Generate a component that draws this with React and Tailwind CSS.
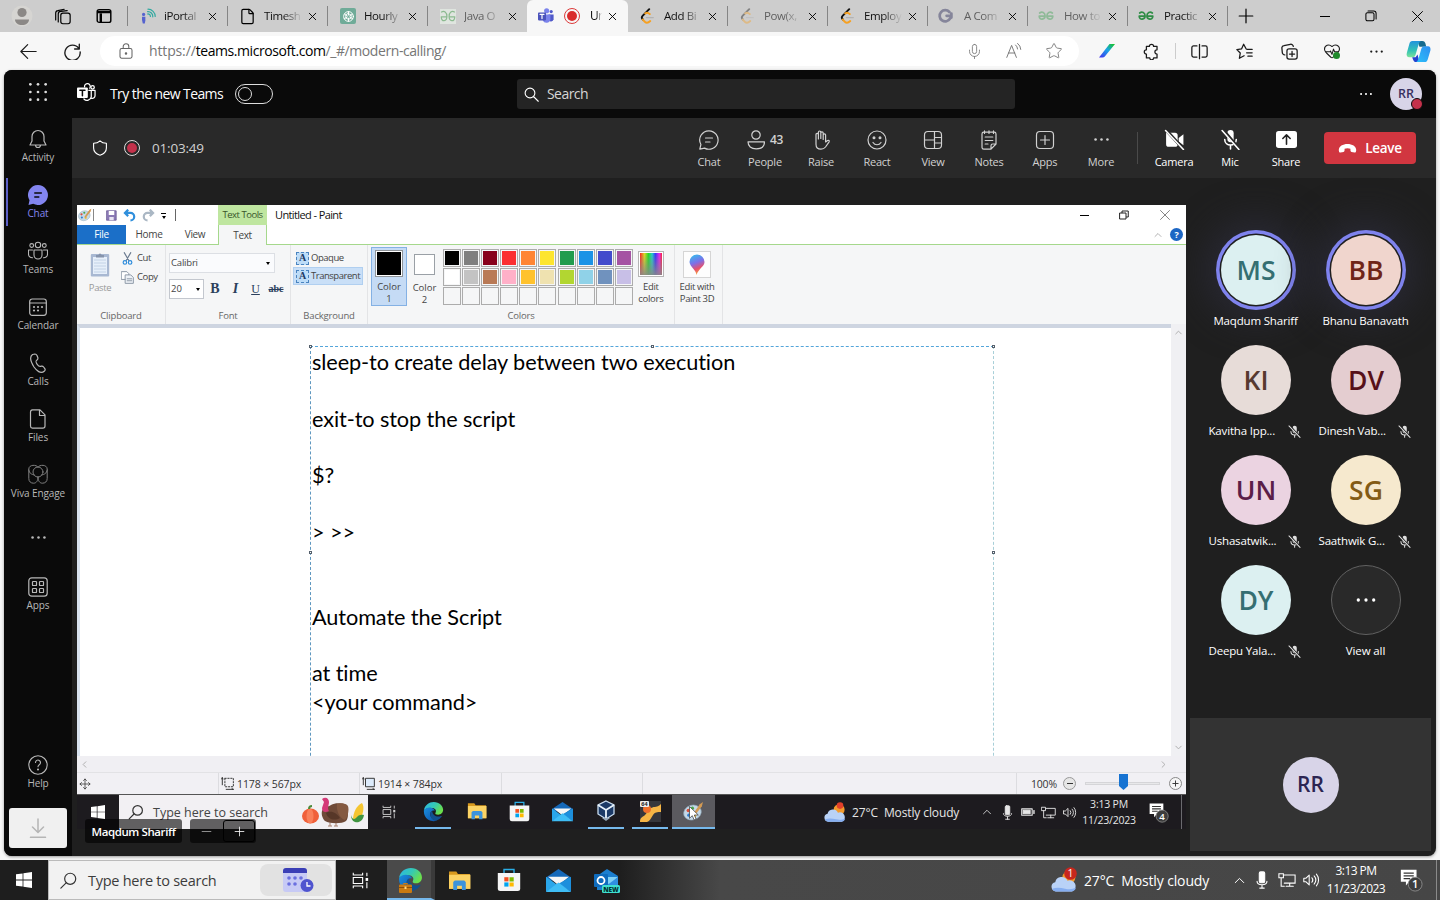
import React from "react";
import {
  Mic, Star, HeartPulse, X, Minus, Plus, ChevronUp, ChevronLeft, ChevronRight, ChevronDown,
  File, Move,
} from "lucide-react";

const Svg = ({ s = 20, w, h, vb = "0 0 20 20", sw = 1.2, children, className = "" }) => (
  <svg width={w || s} height={h || s} viewBox={vb} fill="none" stroke="currentColor" strokeWidth={sw}
    strokeLinecap="round" strokeLinejoin="round" className={"shrink-0 " + className}>{children}</svg>
);
const Cell = ({ className = "", children }) => (
  <div className={"flex shrink-0 items-center justify-center " + className}>{children}</div>
);
const Dots = ({ s = 16, className = "" }) => (
  <Svg s={s} className={className}><g fill="currentColor" stroke="none"><circle cx="3" cy="10" r="1.5" /><circle cx="10" cy="10" r="1.5" /><circle cx="17" cy="10" r="1.5" /></g></Svg>
);

/* ---------- brand drawings ---------- */
const TeamsColor = () => (
  <Svg s={16} sw={0} className="overflow-visible">
    <circle cx="16.5" cy="4.5" r="2" fill="#5059c9" /><circle cx="10.8" cy="3.4" r="3.2" fill="#7b83eb" />
    <path d="M13 8h6.5v6a3.5 3.5 0 0 1-6.5 1z" fill="#5059c9" /><path d="M6 8h9.5v6.5a5 5 0 0 1-9.5 1z" fill="#7b83eb" />
    <rect x="0" y="5.5" width="10" height="10" rx="1" fill="#4b53bc" />
    <path d="M2.6 8h4.8M5 8v5.2" stroke="#fff" strokeWidth="1.5" />
  </Svg>
);
const TeamsWhite = () => (
  <Svg s={19} sw={1.3}>
    <path d="M8 4.2a3 3 0 1 1 5.4 1.2" /><circle cx="16.4" cy="4.6" r="1.8" />
    <path d="M12.5 7.8H15v6.7a4.5 4.5 0 0 1-7.7 2.3M15 7.8h4v5.4a3 3 0 0 1-3.6 3" />
    <rect x="0" y="4.8" width="11.4" height="11" rx="1" fill="#fff" stroke="none" />
    <path d="M3 7.6h5.4M5.7 7.6v5.8" stroke="#0a0a0a" strokeWidth="1.6" />
  </Svg>
);
const Leet = ({ dim }) => (
  <Svg s={16} sw={2.4} className={dim ? "opacity-40" : ""}>
    <path d="M11.500 1.500 3.500 9.600a3.400 3.400 0 0 0 0 4.800" stroke="#111" />
    <path d="M6.500 6.800c2-1.700 4-1 5.800.8M3.500 14.400l2.500 2.800c2 1.800 4.500 1.300 6.800-.9" stroke="#f6a021" />
    <path d="M8 12h8.500" stroke="#b3b3b3" strokeWidth="1.800" />
  </Svg>
);
const Geeks = ({ tone }) => (
  <Svg w={16} h={10} vb="0 0 16 10" sw={1.7} className={tone}>
    <path d="M1.700 2C4 .3 7.100 1.600 7.100 5S1.500 9.800 1.200 5.200H6.500M14.300 2C12 .3 8.900 1.600 8.900 5s5.600 4.800 5.900.2H9.500" />
  </Svg>
);
const Edge = ({ s = 24 }) => (
  <svg width={s} height={s} viewBox="0 0 24 24" className="shrink-0">
    <defs>
      <linearGradient id="eg1" x1="0" y1="0" x2="1" y2="0.5"><stop offset="0" stopColor="#2bb5e8" /><stop offset=".55" stopColor="#35c9b4" /><stop offset="1" stopColor="#6be04c" /></linearGradient>
      <linearGradient id="eg2" x1="0" y1="0" x2="1" y2="1"><stop offset="0" stopColor="#1a8fe0" /><stop offset="1" stopColor="#0c50a8" /></linearGradient>
    </defs>
    <path d="M1 10.500C2 4.500 7 1 12.200 1 18.800 1 23 5.500 23 10c0 3.500-2.700 5.600-5.600 5.600-2.400 0-3.900-1-3.200-2 1.600-2.600-.2-5.600-4-5.600C6 8 2.500 9 1 10.500z" fill="url(#eg1)" />
    <path d="M1 10.800C3 7.800 7.200 6.800 10.200 8c1.600.6 2.800 1.700 3.300 2.900-3-.8-5.200 1.200-5.200 4.300 0 3.800 3.400 6.800 7.400 7.200A11 11 0 0 1 1 12z" fill="url(#eg2)" />
    <path d="M8.300 15.200c0-2 .8-3.500 2.200-4.100.2 4 3.400 6.700 7 6.700 1.800 0 3-.5 3.700-.7.5 0 .6.300.3.700A11 11 0 0 1 15 22.500c-4.200 0-6.700-3.500-6.700-7.300z" fill="#12508f" />
  </svg>
);
const Folder = ({ s = 22 }) => (
  <svg width={s} height={s} viewBox="0 0 22 22" className="shrink-0">
    <path d="M1 2.500h7l1.500 2.200H21V19H1z" fill="#d99a1e" /><path d="M1 5.500h20.500V19H1z" fill="#fcd364" />
    <path d="M5 20v-7.500l1.500-1.500h9l1.500 1.500V20h-3.700v-4H8.700v4z" fill="#3c93dc" />
  </svg>
);
const Store = ({ s = 24 }) => (
  <svg width={s} height={s} viewBox="0 0 24 24" className="shrink-0">
    <path d="M7 6V1.500h10V6" fill="none" stroke="#2aaee6" strokeWidth="1.400" />
    <path d="M.8 5h22.400v15.500a2.500 2.500 0 0 1-2.500 2.500H3.300a2.500 2.500 0 0 1-2.500-2.500z" fill="#f5f5f5" />
    <path fill="#f25022" d="M7.300 9.200h4.200v4.200H7.300z" /><path fill="#7fba00" d="M12.500 9.200h4.200v4.200h-4.200z" />
    <path fill="#00a4ef" d="M7.300 14.400h4.200v4.200H7.300z" /><path fill="#ffb900" d="M12.500 14.400h4.200v4.200h-4.200z" />
  </svg>
);
const Mail = ({ s = 24 }) => (
  <svg width={s} height={s} viewBox="0 0 24 24" className="shrink-0">
    <path d="M0 9 12 1l12 8v3H0z" fill="#1568b8" /><path d="M2 8.500h20l-10 8z" fill="#f6f6f6" />
    <path d="M0 8.500 12 17 0 23z" fill="#2aa6ea" /><path d="M24 8.500v14.500L12 15z" fill="#1d8fdc" /><path d="m0 23 12-9 12 9z" fill="#3fbdf5" />
  </svg>
);
const Windows = ({ s = 16 }) => (
  <svg width={s} height={s} viewBox="0 0 16 16" className="shrink-0" fill="#fff"><path d="M0 2.300 6.600 1.400v6.200H0zM7.400 1.300 16 0v7.600H7.400zM0 8.400h6.600v6.200L0 13.700zM7.400 8.400H16V16l-8.600-1.200z" /></svg>
);
const TaskView = ({ s = 17 }) => (
  <Svg s={s} sw={1.300} className="text-white">
    <path d="M1.500 1v2.500h11V1M1.500 19v-2.500h11V19M1.500 6.500h11v7h-11zM17.500 1v4M17.500 12v7" strokeLinecap="butt" strokeLinejoin="miter" /><rect x="16" y="7" width="3" height="3.500" fill="#fff" stroke="none" />
  </Svg>
);
const Weather = ({ s = 24, n }) => (
  <svg width={s} height={s} viewBox="0 0 24 24" className="shrink-0">
    <circle cx="16.500" cy="9.500" r="6" fill="#f39a2c" />
    <path d="M4.500 22.500a4.300 4.300 0 0 1-.6-8.500 6 6 0 0 1 11.300-1.300 5 5 0 0 1 4.300 9.800z" fill="#b9d2f7" />
    <path d="M1 20c4-1.500 8-1 12 0s7 .5 10-1c-.4 2.300-2 3.500-4 3.500H4.500A4 4 0 0 1 1 20z" fill="#86aef0" />
    {n ? <><circle cx="18" cy="6" r="5.800" fill="#c8271d" /><text x="18" y="9.400" fontSize="9.500" fill="#fff" textAnchor="middle">1</text></> : <circle cx="17.500" cy="5" r="3.600" fill="#e2402a" />}
  </svg>
);
const Palette = ({ s = 14 }) => (
  <svg width={s} height={s} viewBox="0 0 20 20" className="shrink-0">
    <ellipse cx="9" cy="11" rx="8.500" ry="7" fill="#c5d9e8" stroke="#8fa7b8" strokeWidth=".6" transform="rotate(-18 9 11)" />
    <circle cx="5" cy="9" r="1.600" fill="#d8503c" /><circle cx="9" cy="6.800" r="1.500" fill="#48a84a" /><circle cx="5.500" cy="13.500" r="1.500" fill="#2f7ed0" /><circle cx="11" cy="14" r="1.600" fill="#efc03a" />
    <path d="m9 13 7-10 3-2-1 4-7 9z" fill="#d39a54" />
  </svg>
);
const Copilot = () => (
  <svg width="25" height="23" viewBox="0 0 26 24" className="shrink-0">
    <defs>
      <linearGradient id="cp1" x1="0" y1="0" x2="0" y2="1"><stop offset="0" stopColor="#2193dd" /><stop offset=".6" stopColor="#33c3b4" /><stop offset="1" stopColor="#7de39a" /></linearGradient>
      <linearGradient id="cp2" x1="1" y1="0" x2="0" y2="1"><stop offset="0" stopColor="#2f8ef0" /><stop offset="1" stopColor="#2cc0fa" /></linearGradient>
    </defs>
    <path d="M12 1h5c2 0 2.800 1.200 3.300 3l.8 3H14z" fill="#176b8d" />
    <path d="M6.500 1h9c-1.500.8-2 2-2.500 4l-3 10c-.6 2-1.600 3-3.600 3H3.500C1 18 .2 16 .8 13.500L3.500 4C4 2 5 1 6.500 1z" fill="url(#cp1)" />
    <path d="M6.500 18H10l2-3 2 8h-3.500C8 23 7.200 20.500 6.500 18z" fill="#2543d0" />
    <path d="M19.500 6.500H23c2 0 3 2 2.400 4.500l-2.700 9c-.6 2-1.600 3-3.200 3h-9c1.500-.8 2-2 2.600-4l2.800-9.500c.6-2 1.600-3 3.600-3z" fill="url(#cp2)" />
  </svg>
);
const Speaker = ({ s = 18 }) => (
  <Svg s={s}><path d="M2 8v4h2.500L8 15.500v-11L4.500 8zM11 7.500a4 4 0 0 1 0 5M13.500 5.500a7 7 0 0 1 0 9M16 3.500a10 10 0 0 1 0 13" /></Svg>
);
const Net = ({ s = 18 }) => (
  <Svg s={s}><path d="M7 4.500h12v9H7M13 13.500V17M9 17h8M1 3h5v4.500H1zM3.500 7.500V17H7" strokeLinejoin="miter" /></Svg>
);
const MicSolid = ({ s = 18 }) => (
  <Svg s={s}><rect x="7" y="1" width="6" height="12" rx="1.500" fill="currentColor" /><path d="M4.500 11.500c0 5 11 5 11 0M10 15.500V19M7.500 19h5" /></Svg>
);
const Note = ({ n, s = 26 }) => (
  <svg width={s} height={s} viewBox="0 0 26 26" className="shrink-0">
    <path d="M2 2h17v13h-8l-3.500 4v-4H2z" fill="#fff" /><path d="M5 5.500h11M5 8.500h11M5 11.500h7" stroke="#333" strokeWidth="1.300" />
    <circle cx="17.500" cy="17.500" r="7.500" fill="#3d3d3d" stroke="#8c8c8c" /><text x="17.500" y="21.700" fontSize="12" fill="#fff" textAnchor="middle" fontWeight="600">{n}</text>
  </svg>
);

/* ---------- browser ---------- */
const tabs = [
  { t: "iPortal", i: <Svg s={16} sw={1.500}><path d="M9.500 7.500a3 3 0 0 1 3.500 3M9.500 4.500a6 6 0 0 1 6.500 6.500M10 1.500a9 9 0 0 1 9 9" stroke="#32a9a0" /><circle cx="4.500" cy="8" r="2" fill="#5663cf" stroke="none" /><path d="M2.500 11h4.200v4.500L6 19.500H3.500L2.500 15z" fill="#5663cf" stroke="none" /></Svg> },
  { t: "Timesh", i: <File size={17} strokeWidth={1.700} className="-ml-px" /> },
  { t: "Hourly", i: <Cell className="h-4 w-4 rounded-[2px] bg-[#6fab98]"><Svg s={13} sw={1.500} className="text-white"><circle cx="10" cy="10" r="7.500" /><path d="m10 5.500 4 2.300v4.500l-4 2.300-4-2.300V7.800zM10 2.500v5.300M16 6.500l-4 2.300M16.500 13.500l-4.500-2.500M10 17.500v-5M3.500 13.500 8 11M4 6.500l4 2.400" /></Svg></Cell> },
  { t: "Java O", dim: 1, i: <Cell className="h-[15px] w-4 bg-[#dfe5df]"><Svg w={16} h={13} vb="0 0 16 13" sw={1.200} className="text-[#8cba90]"><path d="M1.500 2C4 .3 6.900 2 6.900 6.500S1.500 13 1.200 6.800H6.500M14.500 2C12 .3 9.100 2 9.100 6.500s5.400 6.500 5.700.3H9.500" /></Svg></Cell> },
  { active: 1, t: "Ur" },
  { t: "Add Bi", i: <Leet /> },
  { t: "Pow(x,", dim: 1, i: <Leet dim /> },
  { t: "Employ", i: <Leet /> },
  { t: "A Com", dim: 1, i: <Svg s={16} sw={3.400} className="-ml-[3px] text-[#85859a]"><path d="M15.500 5a7 7 0 1 0 1 8M12 9.800h6M18 7v5" /></Svg> },
  { t: "How to", dim: 1, i: <Geeks tone="-ml-[2px] text-[#8fba98]" /> },
  { t: "Practic", i: <Geeks tone="-ml-[2px] text-[#2f8d46]" /> },
];

function BrowserTab({ tab, sep }) {
  if (tab.active)
    return (
      <div className="flex h-full w-[101px] shrink-0 items-center rounded-t-md bg-[#f7f7f7] pl-[11px]">
        <TeamsColor />
        <Cell className="ml-[10px] size-4 rounded-full border-[1.500px] border-[#dc3a3a]"><span className="size-[10px] rounded-full bg-[#d92c2c]" /></Cell>
        <span className="ml-[10px] w-[12px] overflow-hidden text-xs tracking-[-0.06em] [mask-image:linear-gradient(to_right,#000_50%,transparent)]">{tab.t}</span>
        <X size={13} strokeWidth={1.700} className="ml-[4px]" />
      </div>
    );
  return (
    <div className="flex h-full w-[100px] shrink-0 items-center pl-[12px]">
      <div className={"flex h-5 w-[88px] items-center border-r " + (sep ? "border-transparent" : "border-[#858585]")}>
        <span className="flex w-[24px] shrink-0">{tab.i}</span>
        <span className={"w-[38px] shrink-0 overflow-hidden text-[11.500px] tracking-[-0.035em] whitespace-nowrap [mask-image:linear-gradient(to_right,#000_50%,transparent)] " + (tab.dim ? "text-[#5f5f5f]" : "text-[#111]")}>{tab.t}</span>
        <X size={13} strokeWidth={1.700} className="ml-[4px] shrink-0" />
      </div>
    </div>
  );
}

function TabStrip() {
  return (
    <div className="flex h-8 shrink-0 items-center bg-[#cdcdcd] text-black">
      <Cell className="w-11"><svg width="22" height="22" viewBox="0 0 22 22"><circle cx="11" cy="11" r="10.500" fill="#d6d5d2" /><circle cx="11" cy="7.500" r="4.600" fill="#8b8886" /><path d="M4 14.500h14c0 3.500-3 5.500-7 5.500s-7-2-7-5.500z" fill="#8b8886" /></svg></Cell>
      <Cell className="w-9"><Svg s={17} sw={1.400}><rect x="8" y="6" width="11" height="12.500" rx="2.500" /><path d="M5 16.500V7a3 3 0 0 1 3-3l7.500-1M2 14V6a3 3 0 0 1 2.500-3L12 1.500" /></Svg></Cell>
      <Cell className="w-[47px] pl-px"><Svg s={16} sw={1.800}><rect x="1.500" y="2" width="17" height="16" rx="2.500" /><path d="M1.500 5h17M6 7v11" strokeWidth="3" strokeLinecap="butt" /></Svg></Cell>
      <div className="h-5 w-px bg-[#858585]" />
      {tabs.map((t, i) => (
        <div key={i} className={"h-8 " + (i === 4 ? "-ml-px" : "")}><BrowserTab tab={t} sep={i === 3} /></div>
      ))}
      <Cell className="w-[36px]"><Svg s={16} sw={1.500}><path d="M10 1.500v17M1.500 10h17" /></Svg></Cell>
      <div className="flex flex-1 justify-end">
        <Cell className="w-[46px]"><span className="h-px w-[10px] bg-black" /></Cell>
        <Cell className="w-[46px]"><Svg s={12} sw={1.700}><rect x="1.500" y="4.500" width="13.500" height="13.500" rx="2.500" /><path d="M5 1.800h9.500a4 4 0 0 1 4 4V15" /></Svg></Cell>
        <Cell className="w-[46px]"><Svg s={11} sw={1.800}><path d="m1 1 18 18M19 1 1 19" /></Svg></Cell>
      </div>
    </div>
  );
}

function AddressBar() {
  return (
    <div className="flex h-[38px] shrink-0 items-center text-[#1b1b1b]">
      <Cell className="w-14"><Svg s={17} sw={1.400}><path d="M19 10H1.500M9 2 1 10l8 8" /></Svg></Cell>
      <Cell className="w-[32px]"><Svg s={17} sw={1.600}><path d="M17.500 6.500A9 9 0 1 0 19 10.500M18 1.500V7h-5.500" /></Svg></Cell>
      <div className="ml-[12px] flex h-[30px] w-[979px] items-center rounded-full bg-white">
        <Cell className="ml-[15px] w-[22px] text-[#666]"><Svg s={16} sw={1.300}><rect x="2.500" y="7" width="15" height="12" rx="2" /><path d="M6.500 7V4.500a3.500 3.500 0 0 1 7 0V7" /><circle cx="10" cy="13" r=".9" fill="currentColor" /></Svg></Cell>
        <div className="ml-3 flex-1 text-sm text-[#757575] tracking-[-0.03em]"><span className="tracking-[-0.01em]">https://</span><span className="text-black">teams.microsoft.com</span>/_#/modern-calling/</div>
        <Cell className="w-10 text-[#777]"><Mic size={17} strokeWidth={1.200} /></Cell>
        <Cell className="w-10 text-[#777]"><Svg s={16}><path d="m1 18 6-15 6 15M3 12.500h8M12 2.500a7 7 0 0 1 2.500 5M14.500.5A10 10 0 0 1 18.500 8" /></Svg></Cell>
        <Cell className="mr-[5px] w-10 text-[#777]"><Star size={18} strokeWidth={1.200} /></Cell>
      </div>
      <Cell className="w-[55px]"><svg width="16" height="14" viewBox="0 0 16 14"><defs><linearGradient id="pen" x1="1" y1="0" x2="0" y2="1"><stop offset="0" stopColor="#17c417" /><stop offset=".45" stopColor="#19a5e6" /><stop offset="1" stopColor="#442df0" /></linearGradient></defs><path d="M10.500 0H16L5.800 12.500Q5 13.500 3.500 13.500H0z" fill="url(#pen)" /></svg></Cell>
      <Cell className="w-[35px]"><Svg s={17} sw={1.500}><path d="M4 4h3.500a2.500 2.500 0 0 1 5 0H16.500v4a1.500 1.500 0 0 0 0 5v4.500h-4a2.200 2.200 0 0 1-4.500 0H4v-4.500a2.500 2.500 0 0 1 0-5z" /></Svg></Cell>
      <div className="ml-[6px] h-4 w-px bg-[#ccc]" />
      <Cell className="w-[47px]"><Svg s={17} sw={1.500}><path d="M7 3.500H3a2 2 0 0 0-2 2v9a2 2 0 0 0 2 2h4M13 3.500h4a2 2 0 0 1 2 2v9a2 2 0 0 1-2 2h-4M10 1.500v17" /></Svg></Cell>
      <Cell className="w-[42px]"><Svg s={17} sw={1.500}><path d="M12 7 9 1.500 6.500 7l-5.500.8 4 4-1 6.200L9.500 15M13 7.500h6M12.500 11.500H19M14 15.500h5" /></Svg></Cell>
      <Cell className="w-[48px]"><Svg s={17} sw={1.500}><rect x="7" y="7" width="12" height="12" rx="2.500" /><path d="M13 10v6M10 13h6M4.500 14A3 3 0 0 1 1.500 11L1 5.500A3 3 0 0 1 3.500 3L11 1.500A3 3 0 0 1 14.500 4" /></Svg></Cell>
      <Cell className="relative w-[38px]"><HeartPulse size={18} strokeWidth={1.400} /><span className="absolute top-[10px] left-[20px] size-[7px] rounded-full bg-[#1f8a2c]" /></Cell>
      <Cell className="w-[50px]"><Dots s={15} /></Cell>
      <Cell className="w-[34px]"><Copilot /></Cell>
    </div>
  );
}

/* ---------- Teams chrome ---------- */
function TeamsHeader() {
  return (
    <div className="flex h-12 shrink-0 items-center bg-[#0a0a0a] text-white">
      <Cell className="w-[68px] pb-[5px]"><Svg s={18} className="text-[#ddd]"><g fill="currentColor" stroke="none">{[1.500, 10, 18.500].map((y) => [1.500, 10, 18.500].map((x) => <circle key={x + "-" + y} cx={x} cy={y} r="1.500" />))}</g></Svg></Cell>
      <Cell className="ml-[4px] w-5 pb-[4px]"><TeamsWhite /></Cell>
      <span className="ml-[14px] w-[125px] text-sm tracking-[-0.042em] whitespace-nowrap">Try the new Teams</span>
      <div className="flex h-5 w-[38px] items-center rounded-full border border-[#ddd] pl-[2px]"><span className="size-[14px] rounded-full border border-[#ddd]" /></div>
      <div className="ml-[244px] flex h-[30px] w-[498px] items-center rounded-[3px] bg-[#242424] pl-[7px]">
        <Svg s={15} sw={1.500}><circle cx="8" cy="8" r="6.500" /><path d="m13 13 6 6" /></Svg>
        <span className="ml-2 text-sm tracking-[-0.04em] text-[#d6d6d6]">Search</span>
      </div>
      <div className="flex flex-1 items-center justify-end pr-[14px]">
        <Dots s={14} />
        <div className="relative ml-[17px] flex size-8 items-center justify-center rounded-full bg-[#d8d4e8] text-[12.500px] font-semibold text-[#37305f]">RR
          <span className="absolute right-[-1px] bottom-0 size-3 rounded-full border border-[#0a0a0a] bg-[#c4314b]" />
        </div>
      </div>
    </div>
  );
}

const rail = [
  ["Activity", <Svg s={20}><path d="M10 1.500a6 6 0 0 0-6 6v4.500L2 16h16l-2-4V7.500a6 6 0 0 0-6-6zM7.500 16a2.500 2.500 0 0 0 5 0" /></Svg>],
  ["Chat", <Svg s={20} sw={1.500}><path d="M10 0a10 10 0 1 1-4.800 18.800L.5 20l1-4.800A10 10 0 0 1 10 0z" fill="#8385f0" stroke="none" /><path d="M6.800 8h6.500M6.800 12h4" stroke="#0a0a0a" /></Svg>],
  ["Teams", <Svg s={20} sw={1.100}><circle cx="10" cy="4" r="2.700" /><circle cx="3.700" cy="4.500" r="1.900" /><circle cx="16.300" cy="4.500" r="1.900" /><path d="M6 9h8v5a4 4 0 0 1-8 0zM4.500 9h-4v4c0 2.500 1.500 3.700 4 3.700M15.500 9h4v4c0 2.500-1.500 3.700-4 3.700" /></Svg>],
  ["Calendar", <Svg s={20}><rect x="1.700" y="2" width="16.600" height="16.300" rx="2.500" /><path d="M1.700 6h16.600" /><g fill="currentColor" stroke="none"><circle cx="6" cy="13.500" r="1.100" /><circle cx="10" cy="13.500" r="1.100" /><circle cx="10" cy="10" r="1.100" /><circle cx="14" cy="10" r="1.100" /><circle cx="6" cy="10" r="1.100" /></g></Svg>],
  ["Calls", <Svg s={20}><path d="M4.500 1.500 7 1c1 0 1.500.5 2 1.500l.8 2c.3 1 0 1.800-.8 2.400-1.300 1-1.800 1.600.2 4.400s2.600 2.300 4 1.900c1-.3 1.800 0 2.400.8l1.200 1.700c.6.900.5 1.600-.3 2.300C12.500 21.500 8.500 17.500 6 14 3.500 10 1 4 4.500 1.500z" /></Svg>],
  ["Files", <Svg s={20}><path d="M4.500.8H12l5 5V17a2.200 2.200 0 0 1-2.200 2.200H4.500A2.200 2.200 0 0 1 2.500 17V3A2.200 2.200 0 0 1 4.500.8zM11.500 1v5.500H17" /></Svg>],
  ["Viva Engage", <Svg s={20} sw={1} className="text-[#808080]"><circle cx="10" cy="8" r="5" /><path d="M10 3C8.500.5 1 .3.8 5v9.500c0 3 2 4.700 4.700 4.700 3 0 4.500-2.500 4.500-6.200M10 3c1.500-2.500 9-2.700 9.200 2v9.500c0 3-2 4.700-4.700 4.700-3 0-4.500-2.500-4.500-6.200M.8 6c.5 3.500 3 4.500 5.500 5M19.200 6c-.5 3.500-3 4.500-5.500 5" /></Svg>],
  ["", <Dots s={17} />],
  ["Apps", <Svg s={20}><rect x=".8" y=".8" width="18.400" height="18.400" rx="3" /><rect x="4.500" y="4.500" width="4" height="4" rx=".6" /><rect x="11.500" y="4.500" width="4" height="4" rx=".6" /><rect x="4.500" y="11.500" width="4" height="4" rx=".6" /><rect x="11.500" y="11.500" width="4" height="4" rx=".6" /></Svg>],
];

const RailItem = ({ label, icon, active }) => (
  <div className={"relative flex h-14 w-full shrink-0 flex-col items-center " + (active ? "text-[#8385f0]" : "text-[#b8b8b8]") + (label === "Viva Engage" ? " pt-[10px]" : " pt-[11px]")}>
    {active && <span className="absolute top-1 left-[2px] h-12 w-[2px] bg-[#5b5fc7]" />}
    <div className={label ? "" : "pt-[8px]"}>{icon}</div>
    <span className={"text-[10px] leading-[14px] tracking-[-0.01em] whitespace-nowrap " + (label === "Viva Engage" ? "mt-[2px]" : "mt-px")}>{label}</span>
  </div>
);

function Rail() {
  return (
    <div className="flex w-[68px] shrink-0 flex-col items-center bg-[#0a0a0a]">
      {rail.map(([l, i], k) => <RailItem key={k} label={l} icon={i} active={l === "Chat"} />)}
      <div className="flex-1" />
      <RailItem label="Help" icon={<Svg s={20} sw={1.100}><circle cx="10" cy="10" r="9.200" /><path d="M7.500 7.500a2.500 2.500 0 1 1 3.800 2.200c-.9.6-1.300 1-1.300 2.100" /><circle cx="10" cy="14.500" r=".5" fill="currentColor" /></Svg>} />
      <div className="my-2 flex h-10 w-[58px] items-center justify-center rounded-[3px] bg-[#f0f0f0] text-[#b5b5b5]">
        <Svg s={20} sw={1.500}><path d="M10 1v13M4.500 9l5.500 5.500L15.500 9M2.500 19.300h15" /></Svg>
      </div>
    </div>
  );
}

const actions = [
  ["Chat", <Svg s={20}><path d="M10 .8a9.200 9.200 0 1 1-4.500 17.300L.8 19.200l1.100-4.700A9.200 9.200 0 0 1 10 .8zM6.500 8h7M6.500 12h4.500" /></Svg>],
  ["People", <span className="flex items-center gap-[3px]"><Svg s={20}><circle cx="9" cy="5" r="4.200" /><path d="M1 11.800h16.500c0 4.500-3 7-8.200 7S1 16.300 1 11.800z" /></Svg><b className="text-xs font-semibold tracking-[-0.04em]">43</b></span>],
  ["Raise", <Svg s={20}><path d="M5 11V4.500a1.200 1.200 0 0 1 2.400 0V9M7.400 8V2.200a1.200 1.200 0 0 1 2.400 0V8.500M9.800 8.500V3a1.200 1.200 0 0 1 2.400 0v6.500M12.200 8V5a1.200 1.200 0 0 1 2.400 0v7l2-1.500c1.200-.6 2 .3 1.500 1.300L14.500 17c-1.200 1.600-2.700 2.200-4.500 2.200-3 0-5-2-5-5V10" /></Svg>],
  ["React", <Svg s={20}><circle cx="10" cy="10" r="9" /><path d="M6 12.500c2 3 6 3 8 0" /><circle cx="7" cy="7.800" r=".9" fill="currentColor" /><circle cx="13" cy="7.800" r=".9" fill="currentColor" /></Svg>],
  ["View", <Svg s={20}><rect x="1.500" y="1.500" width="17" height="17" rx="3.500" /><path d="M11.500 1.500v17M1.500 10h10M11.500 7.500h7M11.500 13h7" /></Svg>],
  ["Notes", <Svg s={20}><path d="M3 4a1.800 1.800 0 0 1 1.800-1.800h10.400A1.800 1.800 0 0 1 17 4v10l-5 5.200H4.800A1.800 1.800 0 0 1 3 17.500zM17 14h-3.200a1.800 1.800 0 0 0-1.800 1.800V19M6.200 7h7.600M6.200 10.500h7.600M6.200 14H9M5.500.8v2.700M10 .8v2.700M14.500.8v2.700" /></Svg>],
  ["Apps", <Svg s={20}><rect x="1.500" y="1.500" width="17" height="17" rx="3.500" /><path d="M10 5.500v9M5.500 10h9" /></Svg>],
  ["More", <Dots s={17} />],
];
const devices = [
  ["Camera", <Svg s={21} sw={1.500}><path d="M2 3.500h8.500a2.500 2.500 0 0 1 2.500 2.500v8.500a2.500 2.500 0 0 1-2.500 2.500H4.500A2.500 2.500 0 0 1 2 14.500zM14 8.500l4.500-3.500v10.500L14 12z" fill="currentColor" stroke="none" /><path d="m2.500 1.500 16 17.500" stroke="#292929" strokeWidth="3" /><path d="m1.500 1.500 17 18" /></Svg>],
  ["Mic", <Svg s={21} sw={1.500}><rect x="7" y="1" width="6" height="11.500" rx="3" fill="currentColor" stroke="none" /><path d="M4.500 10c0 7 11 7 11 0M10 15.500V19" /><path d="m3.500 1.500 14.500 17" stroke="#292929" strokeWidth="3" /><path d="m2 1.500 16 18" /></Svg>],
  ["Share", <Svg s={21} sw={1.500}><rect x="0" y="2" width="20" height="16" rx="2.500" fill="currentColor" stroke="none" /><path d="M10 14.500V6M6.500 9 10 5.500 13.500 9" stroke="#222" /></Svg>],
];
const Action = ({ label, icon }) => (
  <div className="flex w-14 flex-col items-center pt-px">
    <div className="flex h-[22px] items-center">{icon}</div>
    <span className="mt-[4px] text-[11px] leading-[14px] tracking-[-0.02em]">{label}</span>
  </div>
);

function CallBar() {
  return (
    <div className="flex h-[60px] shrink-0 items-center bg-[#292929] pr-5 text-[#d1d1d1]">
      <Svg s={16} sw={1.400} className="ml-5 text-white"><path d="M10 1C8 3 5 4 2 4v6c0 4.500 3.500 7.500 8 9 4.500-1.500 8-4.500 8-9V4c-3 0-6-1-8-3z" /></Svg>
      <Cell className="ml-4 size-4 rounded-full border-[1.500px] border-[#ddd]"><span className="size-[10px] rounded-full bg-[#c4314b]" /></Cell>
      <span className="ml-3 text-[13.500px] font-medium tracking-[-0.015em]">01:03:49</span>
      <div className="flex-1" />
      {actions.map(([l, i]) => <Action key={l} label={l} icon={i} />)}
      <div className="mx-2 h-8 w-px bg-[#4a4a4a]" />
      <div className="flex text-white">{devices.map(([l, i]) => <Action key={l} label={l} icon={i} />)}</div>
      <div className="ml-[10px] flex h-8 w-[92px] items-center justify-center gap-2 rounded bg-[#d13640] text-white">
        <Svg w={19} h={11} vb="0 0 20 12"><path d="M10 1C5 1 .5 3.500.500 7.500c0 2 .7 3 2 2.800l3-.6c1-.2 1.300-.8 1.300-2V6.200c2-.8 4.400-.8 6.400 0v1.500c0 1.200.3 1.800 1.300 2l3 .6c1.300.2 2-.8 2-2.800C19.500 3.500 15 1 10 1z" fill="currentColor" stroke="none" /></Svg>
        <span className="text-[13.500px] font-semibold tracking-[-0.02em]">Leave</span>
      </div>
    </div>
  );
}

/* ---------- shared Paint window ---------- */
const row1 = ["bg-black", "bg-[#7f7f7f]", "bg-[#88001b]", "bg-[#fb2f31]", "bg-[#ff8534]", "bg-[#fde52f]", "bg-[#219c4e]", "bg-[#1b93e6]", "bg-[#424bcc]", "bg-[#a553a3]"];
const row2 = ["bg-white", "bg-[#c3c3c3]", "bg-[#b97a56]", "bg-[#ffb0c8]", "bg-[#ffc22e]", "bg-[#efe2b0]", "bg-[#b2d631]", "bg-[#90d2e8]", "bg-[#7092be]", "bg-[#c8bfe7]"];
const row3 = Array(10).fill("bg-[#f5f6f7]");

const Group = ({ w, label, children }) => (
  <div className={"flex h-full shrink-0 flex-col border-r border-[#e3e4e6] " + w}>
    <div className="flex h-[64px] pt-px">{children}</div>
    <span className="text-center text-[9.500px] leading-[14px] tracking-[-0.02em] text-[#666]">{label}</span>
  </div>
);
const TextMode = ({ label, on }) => (
  <div className={"flex h-[18px] w-[70px] items-center border pl-[2px] " + (on ? "border-[#b0cff0] bg-[#c9dff7]" : "border-transparent")}>
    <span className="flex size-[13px] shrink-0 items-center justify-center border border-dashed border-[#4a84c0] bg-[#bcdcf8] font-['Liberation_Serif',serif] text-[10px] leading-none font-bold text-[#1d3a66]">A</span>
    <span className="ml-[2px] text-[9.500px] tracking-[-0.05em]">{label}</span>
  </div>
);

function Ribbon() {
  return (
    <div className="flex h-20 shrink-0 border-t border-[#a5d88c] bg-[#f5f6f7] text-[9.500px] leading-3 text-[#444]">
      <Group w="w-[89px]" label="Clipboard">
        <div className="ml-[9px] flex w-7 flex-col items-center pt-[6px] text-[#999]">
          <svg width="20" height="26" viewBox="0 0 20 26"><rect x=".8" y="2" width="18.400" height="22.500" rx="1" fill="#a8b8d2" /><path d="M3 5h14v17H3z" fill="#e6effa" /><path d="M4 8h12M4 11h12M4 14h12M4 17h12M4 20h12" stroke="#c2d2e6" /><path d="M6 3h2.500a1.500 1.500 0 0 1 3 0H14v2.500H6z" fill="#8694ac" /></svg>
          <span className="mt-1 tracking-[-0.04em]">Paste</span>
        </div>
        <div className="ml-[7px] flex flex-col gap-[5px] pt-[5px] tracking-[-0.04em]">
          <div className="flex h-[14px] items-center gap-[3px]"><Svg s={13} sw={1.800}><path d="m5 1 7 12M15 1 8 13" stroke="#6b7b90" /><circle cx="6" cy="16" r="2.700" stroke="#2b8bdc" /><circle cx="14" cy="16" r="2.700" stroke="#2b8bdc" /></Svg>Cut</div>
          <div className="flex h-[14px] items-center gap-[3px]"><Svg s={13} sw={1.500} className="text-[#8c97a6]"><path d="M1 1h8l3 3v9H1z" fill="#fff" /><path d="M7 6h8l4 4v9H7z" fill="#eef2f7" /><path d="M9.500 12h7M9.500 15h7" /></Svg>Copy</div>
        </div>
      </Group>
      <Group w="w-[125px]" label="Font">
        <div className="flex flex-col pt-[7px] pl-[3px]">
          <div className="flex h-5 w-[106px] items-center justify-between border border-[#dcdfe4] bg-[#fafbfd] pr-1 pl-px tracking-[-0.02em]">Calibri<span className="border-x-[2px] border-t-[3px] border-x-transparent border-t-black" /></div>
          <div className="mt-[6px] flex items-center">
            <div className="flex h-5 w-[35px] items-center justify-between border border-[#c3c7ce] bg-white pr-[3px] pl-px text-[9.500px]">20<span className="border-x-[2.500px] border-t-[3px] border-x-transparent border-t-black" /></div>
            <div className="flex font-['Liberation_Serif',serif] text-sm text-[#2b3f5c]">
              <Cell className="w-[22px] font-bold">B</Cell><Cell className="w-[19px] font-bold italic">I</Cell><Cell className="w-[21px] text-xs underline">U</Cell><Cell className="w-[20px] text-[10px] font-bold line-through">abc</Cell>
            </div>
          </div>
        </div>
      </Group>
      <Group w="w-[77px]" label="Background">
        <div className="flex flex-col pt-[3px] pl-[2px]"><TextMode label="Opaque" /><TextMode label="Transparent" on /></div>
      </Group>
      <Group w="w-[307px]" label="Colors">
        <div className="mt-px ml-[3px] flex h-[59px] w-9 flex-col items-center border border-[#84b1e4] bg-[#c5dbf5] pt-[2px] text-center">
          <div className="size-[28px] border border-[#8f9499] bg-black outline-1 -outline-offset-2 outline-white" /><span className="mt-[4px]">Color<br />1</span>
        </div>
        <div className="flex w-[36px] flex-col items-center pt-[8px] pr-px text-center"><div className="size-[21px] border border-[#9aa0a6] bg-white" /><span className="mt-[7px]">Color<br />2</span></div>
        <div className="mt-[3px] flex flex-col gap-px">
          {[row1, row2, row3].map((r, i) => (
            <div key={i} className="flex gap-[1.100px]">{r.map((c, k) => <span key={k} className={"size-[18px] border border-[#acacac] shadow-[inset_0_0_0_1px_#f5f6f7] " + c} />)}</div>
          ))}
        </div>
        <div className="ml-[4px] flex w-7 flex-col items-center pt-[5px] text-center">
          <svg width="26" height="26" viewBox="0 0 26 26"><defs><linearGradient id="rb"><stop offset="0" stopColor="#f22" /><stop offset=".2" stopColor="#dd2" /><stop offset=".38" stopColor="#2d2" /><stop offset=".55" stopColor="#2cc" /><stop offset=".7" stopColor="#33f" /><stop offset=".88" stopColor="#e2e" /><stop offset="1" stopColor="#f23" /></linearGradient><linearGradient id="rg" x1="0" y1="0" x2="0" y2="1"><stop offset="0" stopColor="#888" stopOpacity="0" /><stop offset="1" stopColor="#888" stopOpacity=".9" /></linearGradient></defs><rect x=".5" y=".5" width="25" height="25" fill="#fff" stroke="#b5b5b5" /><path d="M2 2h22v22H2z" fill="url(#rb)" /><path d="M2 2h22v22H2z" fill="url(#rg)" /></svg>
          <span className="mt-[4px] tracking-[-0.03em]">Edit<br />colors</span>
        </div>
      </Group>
      <Group w="w-[48px]" label="">
        <div className="flex w-full flex-col items-center pt-[5px] pr-[3px] text-center whitespace-nowrap">
          <svg width="28" height="27" viewBox="0 0 28 27"><defs><linearGradient id="p3" x1=".3" y1="0" x2=".6" y2="1"><stop offset="0" stopColor="#38b9ee" /><stop offset=".4" stopColor="#7d6fe8" /><stop offset=".7" stopColor="#e8506c" /><stop offset="1" stopColor="#f9b637" /></linearGradient></defs><rect x=".5" y=".5" width="27" height="26" fill="#fdfdfd" stroke="#d5d5d5" /><path d="M14 3.500a7.500 7.500 0 0 1 7.500 7.500c0 4.500-5.500 6-8 13-.3-5-6.500-8-7-13A7.500 7.500 0 0 1 14 3.500z" fill="url(#p3)" /></svg>
          <span className="mt-[3px] tracking-[-0.04em]">Edit with<br />Paint 3D</span>
        </div>
      </Group>
    </div>
  );
}

const Handle = ({ at }) => <span className={"absolute size-[3px] border border-[#55606c] bg-white " + at} />;
const notes = ["sleep-to create delay between two execution", "", "exit-to stop the script", "", "$?", "", "> >>", "", "", "Automate the Script", "", "at time", "<your command>"];

function PaintWindow() {
  return (
    <div className="flex h-[589px] flex-col bg-white text-[#222]">
      <div className="flex h-5 shrink-0 items-center">
        <Cell className="w-[15px]"><Palette /></Cell><span className="ml-px h-3 w-px bg-[#888]" />
        <Cell className="ml-[8px] w-[18px]"><Svg s={11} className="text-[#6b5a96]" sw={1.500}><path d="M1.500 1.500h17v17h-17z" fill="#8b7ab5" /><path d="M5 2h10v7H5z" fill="#fff" stroke="none" /><path d="M6 12.500h8v6H6z" fill="#e8e4f2" stroke="none" /></Svg></Cell>
        <Cell className="w-[19px]"><Svg s={13} sw={3.400} className="text-[#2f8fdc]"><path d="M3 6h8.500a5.500 5.500 0 0 1 0 11.500M8 1 3 6l5 5" strokeLinecap="butt" strokeLinejoin="miter" /></Svg></Cell>
        <Cell className="w-[19px]"><Svg s={13} sw={3.400} className="text-[#aab7c4]"><path d="M17 6H8.500a5.500 5.500 0 0 0 0 11.500M12 1l5 5-5 5" strokeLinecap="butt" strokeLinejoin="miter" /></Svg></Cell>
        <Cell className="w-[11px] flex-col gap-[2px] pt-px"><span className="h-px w-[5px] bg-black" /><span className="border-x-[2.500px] border-t-[3px] border-x-transparent border-t-black" /></Cell>
        <span className="ml-[6px] h-3 w-px bg-[#666]" />
        <div className="ml-[42px] flex h-5 w-[49px] items-center justify-center bg-[#bfe6a0] text-[9.500px] tracking-[-0.05em] whitespace-nowrap text-[#38552a]">Text Tools</div>
        <span className="ml-2 text-[11px] tracking-[-0.055em] text-[#111]">Untitled - Paint</span>
        <div className="flex-1" />
        <Cell className="w-10"><span className="h-px w-[9px] bg-black" /></Cell>
        <Cell className="w-10"><Svg s={10} sw={2}><path d="M2 6h12v12H2zM6 5.500V2h12.500v12H15" strokeLinejoin="miter" /></Svg></Cell>
        <Cell className="w-[42px] text-[#777]"><Svg s={10} sw={1.800}><path d="m1 1 18 18M19 1 1 19" /></Svg></Cell>
      </div>
      <div className="flex h-[19px] shrink-0 text-[10px] tracking-[-0.035em] text-[#444]">
        <Cell className="w-[49px] bg-[#1b6fc8] text-white">File</Cell><Cell className="w-[46px]">Home</Cell><Cell className="w-[46px]">View</Cell>
        <Cell className="z-10 -mb-px h-5 w-[49px] border-x border-[#a5d88c] bg-[#f5f6f7]">Text</Cell>
        <div className="flex flex-1 items-center justify-end gap-[6px] pr-[3px]"><ChevronUp size={12} strokeWidth={1.500} className="text-[#999]" /><Cell className="size-[13px] rounded-full bg-[#1c66c4] text-[9px] font-bold text-white">?</Cell></div>
      </div>
      <Ribbon />
      <div className="flex min-h-0 flex-1">
        <div className="relative flex-1 overflow-hidden border-t-[4px] border-l-[3px] border-t-[#ced5e1] border-l-[#d9e3f0] bg-white">
          <div className="absolute top-[18px] left-[230px] h-[460px] w-[684px] border border-dashed border-[#5e97bf] border-t-[#54a5da] border-r-[#a8cfd8] pt-px pl-px font-['Lato',sans-serif] text-[21.700px] leading-[28.300px] tracking-[-0.0045em] text-black [font-variant-ligatures:none]">
            <Handle at="-top-[2px] -left-[2px]" /><Handle at="-top-[2px] left-[340px]" /><Handle at="-top-[2px] -right-[2px]" /><Handle at="top-[204px] -left-[2px]" /><Handle at="top-[204px] -right-[2px]" />
            {notes.map((n, i) => <p key={i} className="h-[28.300px] whitespace-pre">{n}</p>)}
          </div>
        </div>
        <div className="flex w-[15px] flex-col items-center justify-between bg-[#f0f0f3] py-[3px] text-[#aaa]"><ChevronUp size={11} /><ChevronDown size={11} /></div>
      </div>
      <div className="flex h-4 shrink-0 items-center justify-between bg-[#f0eff3] pr-[17px] pl-[2px] text-[#aaa]"><ChevronLeft size={11} /><ChevronRight size={11} /></div>
      <div className="flex h-[22px] shrink-0 items-center border-t border-[#e2e2e5] bg-[#f1f0f4] text-[10.500px] tracking-[-0.02em] text-[#333]">
        <div className="flex h-full w-[142px] items-center border-r border-[#dcdce0] pl-[2px]"><Move size={12} strokeWidth={1.500} /></div>
        <div className="flex h-full w-[141px] items-center gap-[3px] border-r border-[#dcdce0] pl-[2px]"><Svg s={13} sw={1.500}><path d="M2 1v11M1 3l1-2 1 2M8 19h11M17 18l2 1-2 1" /><path d="M6 2h13v13H6z" strokeDasharray="2 2.500" /></Svg><span className="pt-[2px] tracking-[-0.01em]">1178 × 567px</span></div>
        <div className="flex h-full w-[142px] items-center gap-[3px] border-r border-[#dcdce0] pl-[2px]"><Svg s={13} sw={1.500}><path d="M2 1v11M1 3l1-2 1 2M8 19h11M17 18l2 1-2 1" /><path d="M6 2h13v13H6z" fill="#dceafa" /></Svg><span className="pt-[2px] tracking-[-0.01em]">1914 × 784px</span></div>
        <div className="h-full w-[141px] border-r border-[#dcdce0]" />
        <div className="h-full w-[374px] border-r border-[#dcdce0]" />
        <span className="ml-[14px] w-[32px] pt-[2px]">100%</span>
        <Cell className="size-[13px] rounded-full border border-[#999] bg-[#e6e6e6]"><span className="h-px w-[6px] bg-[#333]" /></Cell>
        <div className="relative ml-[9px] h-[3px] w-[75px] border border-[#d5d5d8] bg-[#e8e8ea]"><svg width="9" height="16" viewBox="0 0 9 16" className="absolute -top-[9px] left-[33px]"><path d="M0 0h9v12l-4.500 4L0 12z" fill="#1673d2" /></svg></div>
        <Cell className="ml-[9px] size-[13px] rounded-full border border-[#888] bg-[#f6f6f6]"><Plus size={9} strokeWidth={2.500} /></Cell>
      </div>
    </div>
  );
}

const PinnedApp = ({ w, on, children }) => (
  <div className={"flex h-full shrink-0 items-center justify-center " + w}>
    <div className={"flex h-full w-9 items-center justify-center border-b-2 " + (on ? "border-[#76b9ed]" : "border-transparent")}>{children}</div>
  </div>
);

function RemoteTaskbar() {
  return (
    <div className="flex h-[35px] items-center border-t border-[#555] bg-[#1d1b1f] text-[#e6e6e6]">
      <Cell className="w-[42px]"><Windows s={14} /></Cell>
      <div className="flex h-full w-[249px] shrink-0 items-center bg-[#f2f0f3] pl-[9px] text-[#333]">
        <Svg s={16} sw={1.500}><circle cx="12" cy="8" r="6" /><path d="m7.500 12.500-6 6" /></Svg>
        <span className="ml-[9px] flex-1 pt-[2px] text-[12.500px] tracking-[0] whitespace-nowrap text-[#444]">Type here to search</span>
        <svg width="64" height="32" viewBox="0 0 64 32" className="mr-[3px] shrink-0">
          <ellipse cx="9.500" cy="20" rx="8.500" ry="7.500" fill="#f0603a" /><ellipse cx="9" cy="20" rx="3.500" ry="7.500" fill="#f9805a" /><path d="M8 13c0-2 1-3 3-3" stroke="#4d8a3a" strokeWidth="2" fill="none" />
          <path d="M21 15c1-4 6-4 9-6 4-2.500 10-2.500 16 0 1 6 2 13-1 16-4 3-16 3-21 0-2-2-4-6-3-10z" fill="#6f4a38" />
          <path d="M36 8c4-1 7-1 10 1s1 12-2 15c-5-1-9-9-8-16z" fill="#845941" /><path d="M25 17c5-3 11 0 14 5-5 3-12 2-14-5z" fill="#573728" />
          <path d="M21 3c4-3 7 0 7 3 0 3-2 6 0 9-4 2-7 1-7-3l2-6z" fill="#d43a78" /><path d="M29 27v3M35 27v3M27 30h4M33 30h4" stroke="#a77f6c" />
          <path d="M52 24c0-8 4-15 9-17 3 4 1 13-4 19z" fill="#f5c531" /><path d="M50 19c1 4 3 5 5 3 2-3 5-4 8-3-1 6-5 8-9 7-3-1-4-4-4-7z" fill="#3f9440" />
        </svg>
      </div>
      <Cell className="w-[42px] opacity-80"><TaskView s={14} /></Cell>
      <PinnedApp w="w-[46px]" on><Edge s={21} /></PinnedApp>
      <PinnedApp w="w-[42px]"><Folder s={20} /></PinnedApp>
      <PinnedApp w="w-[43px]"><Store s={21} /></PinnedApp>
      <PinnedApp w="w-[43px]"><Mail s={21} /></PinnedApp>
      <PinnedApp w="w-[44px]" on><svg width="20" height="22" viewBox="0 0 20 22"><path d="m10 1 8 4v9l-8 5-8-5V5z" fill="#1b3966" stroke="#c8dcf0" strokeWidth="1.300" /><path d="m2 5 8 5 8-5M10 10v9" stroke="#e8f2fb" strokeWidth="1.800" fill="none" /><path d="m6 18 4 3 4-3" fill="#99aabb" /></svg></PinnedApp>
      <PinnedApp w="w-[44px]" on><svg width="21" height="21" viewBox="0 0 21 21"><rect width="21" height="21" fill="#36373c" /><path d="M0 21c0-5 3-5 5-7 3-3 2-5 6-7s6 0 10-4v8c-4 0-6 0-8 3s-3 6-6 7z" fill="#f6b545" /><circle cx="7" cy="8" r="4" fill="#ef6f2c" /><rect width="9" height="6" rx="1" fill="#eee" /><text x="4.500" y="5" fontSize="5.500" fontWeight="700" textAnchor="middle" fill="#222">64</text></svg></PinnedApp>
      <div className="relative flex h-full w-[43px] shrink-0 items-center justify-center border-b-2 border-[#76b9ed] bg-[#5b5a5f]">
        <Palette s={21} />
        <svg width="10" height="15" viewBox="0 0 10 15" className="absolute top-[11px] left-[17px]"><path d="M.5.5v11.800l2.800-2.600 1.800 4.200 2-.9L5.300 9h4z" fill="#fff" stroke="#333" strokeWidth=".7" /></svg>
      </div>
      <div className="flex-1" />
      <Weather s={22} />
      <span className="ml-[6px] w-[125px] pt-[2px] text-xs tracking-[-0.01em] whitespace-pre">27°C  Mostly cloudy</span>
      <div className="flex items-center"><Cell className="w-[20px]"><ChevronUp size={14} strokeWidth={1.400} /></Cell><Cell className="w-[20px]"><MicSolid s={15} /></Cell>
        <Cell className="w-[21px]"><Svg s={14} sw={1.500}><path d="M1 5.500h15v9H1z" /><path d="M3 7.500h10v5H3z" fill="currentColor" /><path d="M18.500 8v4" strokeWidth="2" /></Svg></Cell>
        <Cell className="w-[21px]"><Net s={15} /></Cell><Cell className="w-[21px]"><Speaker s={15} /></Cell></div>
      <div className="w-[58px] pb-px text-center text-[10.500px] leading-4 tracking-[-0.02em]">3:13 PM<br />11/23/2023</div>
      <Cell className="mr-[11px] ml-[8px] w-6"><Note n="4" s={21} /></Cell>
      <span className="mr-[4px] h-full w-px bg-[#6a6a6e]" />
    </div>
  );
}

/* ---------- participants ---------- */
const people = [
  ["MS", "Maqdum Shariff", "bg-[#dcf0f1]", "text-[#356f72]", true],
  ["BB", "Bhanu Banavath", "bg-[#f0d5cd]", "text-[#6f2418]", true],
  ["KI", "Kavitha Ipp...", "bg-[#e7dcd8]", "text-[#57392f]"],
  ["DV", "Dinesh Vab...", "bg-[#e4cdd0]", "text-[#561019]"],
  ["UN", "Ushasatwik...", "bg-[#ebd3e1]", "text-[#5b1e48]"],
  ["SG", "Saathwik G...", "bg-[#f6e9ce]", "text-[#835b15]"],
  ["DY", "Deepu Yala...", "bg-[#dcf0f1]", "text-[#356f72]"],
];
const MutedMic = () => (
  <Svg s={13} sw={1.600} className="text-[#e0e0e0]"><rect x="7" y="1" width="6.500" height="11.500" rx="3.200" fill="currentColor" stroke="none" /><path d="M4.500 10c0 7 11.500 7 11.500 0M10.200 15.500V19" /><path d="m3 1.500 15 17" stroke="#1f1f1f" strokeWidth="3" /><path d="m1.500 1.500 17 17.500" /></Svg>
);

function Participants() {
  return (
    <div className="flex w-[246px] shrink-0 flex-col">
      <div className="grid grid-cols-[110px_110px] pt-[57px] pl-[11px] text-white">
        {people.map(([ini, name, bg, fg, live]) => (
          <div key={ini} className="flex h-[110px] flex-col items-center">
            <div className={"flex size-[70px] items-center justify-center rounded-full pt-px text-[26.500px] font-semibold " + bg + " " + fg + (live ? " shadow-[0_0_0_1.500px_#1f1f1f,0_0_0_5px_#7f83ee,0_0_38px_14px_#2a2a36]" : "")}>{ini}</div>
            <div className="z-10 mt-[8px] flex h-4 items-center text-[11.500px] font-medium tracking-[-0.015em] whitespace-nowrap">
              {live ? <span className="-ml-px">{name}</span> : <><span className="-ml-[3px] w-[69px]">{name}</span><span className="ml-[10px]"><MutedMic /></span></>}
            </div>
          </div>
        ))}
        <div className="flex h-[110px] flex-col items-center">
          <div className="flex size-[70px] items-center justify-center rounded-full border border-[#616161] bg-[#292929]"><Dots s={22} /></div>
          <div className="mt-[8px] -ml-px text-[11.500px] leading-4 font-medium tracking-[-0.01em]">View all</div>
        </div>
      </div>
      <div className="flex-1" />
      <div className="mb-[5px] flex h-[133px] w-[241px] items-center justify-center bg-[#333]"><Cell className="size-14 rounded-full bg-[#d8d4e8] text-[21px] font-semibold text-[#2c2552]">RR</Cell></div>
    </div>
  );
}

/* ---------- local taskbar ---------- */
function Taskbar() {
  return (
    <div className="flex h-10 shrink-0 items-center bg-[linear-gradient(to_right,#1e1e1e_0px,#1e1e1e_620px,#484848_720px,#464646_1440px)] text-white">
      <Cell className="w-12"><Windows s={16} /></Cell>
      <div className="flex h-10 w-72 shrink-0 items-center border border-[#bbb] bg-[#f2f2f2] pr-[3px] pl-[11px] text-[#333]">
        <Svg s={17} sw={1.400}><circle cx="12" cy="8" r="6.500" /><path d="m7.500 12.500-6.500 6.500" /></Svg>
        <span className="ml-[11px] flex-1 pt-px text-[14.500px] tracking-[-0.018em] text-[#3c3c3c]">Type here to search</span>
        <Cell className="h-8 w-[72px] rounded-lg bg-[#e2e2e2] pl-1"><svg width="32" height="26" viewBox="0 0 32 26"><rect x="1" y="1" width="24" height="24" rx="3" fill="#c7caf5" /><path d="M1 6V4a3 3 0 0 1 3-3h18a3 3 0 0 1 3 3v2z" fill="#3b3fb6" />{[[7, 11], [13, 11], [19, 11], [7, 17], [13, 17]].map(([x, y]) => <circle key={x + "," + y} cx={x} cy={y} r="1.800" fill="#6a6fe0" />)}<circle cx="25" cy="18.500" r="6.500" fill="#4f54cf" /><path d="M25 15v4h3.500" stroke="#fff" fill="none" strokeWidth="1.300" /></svg></Cell>
      </div>
      <Cell className="w-[51px] pr-[3px]"><TaskView s={17} /></Cell>
      <div className="relative flex h-full w-12 items-center justify-center border-r-4 border-b-2 border-r-[#3a3a3a] border-b-[#76b9ed] bg-[#4a4a4a] pl-[3px]">
        <Edge s={25} /><svg width="13" height="10" viewBox="0 0 13 10" className="absolute bottom-[5px] left-[12px]"><rect y="1.500" width="13" height="8.500" rx="1" fill="#c97a12" /><path d="M0 4.500h13" stroke="#8a4e08" /><path d="M4.500 1.500V.5h4v1" stroke="#c97a12" fill="none" /><rect x="5.500" y="3.500" width="2" height="2.500" fill="#ffd479" /></svg>
      </div>
      <Cell className="w-[49px]"><Folder s={23} /></Cell>
      <Cell className="w-[49px]"><Store s={24} /></Cell>
      <Cell className="w-[49px] pl-px"><Mail s={25} /></Cell>
      <Cell className="w-[49px]"><svg width="26" height="25" viewBox="0 0 26 25"><path d="M3 8 13 1l11 7v14H3z" fill="#1b7fd0" /><path d="M4 9h20l-8 8z" fill="#7fd0f5" /><path d="m24 9-12 9 12 5z" fill="#2f8fe0" /><rect x="0" y="6" width="14" height="13" rx="1" fill="#0f6cbd" /><circle cx="7" cy="12.500" r="3.500" stroke="#fff" strokeWidth="1.800" fill="none" /><rect x="8" y="17" width="18" height="8" rx="1.500" fill="#3fe0d0" /><text x="17" y="23.500" fontSize="6.500" fontWeight="800" textAnchor="middle" fill="#033">NEW</text></svg></Cell>
      <div className="flex-1" />
      <Weather s={26} n />
      <span className="ml-[7px] w-[145px] pt-px text-sm tracking-[-0.01em] whitespace-pre">27°C  Mostly cloudy</span>
      <Cell className="w-[20px]"><ChevronUp size={17} strokeWidth={1.400} /></Cell><Cell className="w-[26px]"><MicSolid s={18} /></Cell><Cell className="w-6"><Net s={18} /></Cell><Cell className="w-6"><Speaker s={18} /></Cell>
      <div className="ml-px w-[64px] text-center text-[12px] leading-[18px] tracking-[-0.045em]">3:13 PM<br />11/23/2023</div>
      <Cell className="mr-[7px] ml-[9px] w-7"><Note n="1" s={24} /></Cell>
      <span className="ml-[4px] h-full w-px bg-[#8a8a8a]" />
      <span className="w-[3px]" />
    </div>
  );
}

export default function App() {
  return (
    <div className="flex h-[900px] w-[1440px] flex-col overflow-hidden bg-[#f7f7f7] font-['Open_Sans','Noto_Sans',sans-serif]">
      <TabStrip />
      <AddressBar />
      <div className="mx-1 mb-1 flex min-h-0 flex-1 flex-col overflow-hidden rounded-lg bg-[#1f1f1f] shadow-[0_1px_3px_#999]">
        <TeamsHeader />
        <div className="flex min-h-0 flex-1">
          <Rail />
          <div className="flex min-w-0 flex-1 flex-col">
            <CallBar />
            <div className="flex min-h-0 flex-1">
              <div className="relative mt-[27px] mr-1 ml-[5px] w-[1109px] shrink-0">
                <PaintWindow />
                <RemoteTaskbar />
                <div className="absolute top-[614px] left-2 flex h-6 items-center gap-2 text-white">
                  <Cell className="h-6 w-[97px] rounded-[3px] bg-black/60 pt-px text-[11.500px] font-semibold tracking-[-0.035em] whitespace-nowrap">Maqdum Shariff</Cell>
                  <div className="flex h-6 w-[66px] items-center rounded-[3px] bg-black/60"><Cell className="w-[33px]"><Minus size={15} strokeWidth={1.300} className="text-[#aaa]" /></Cell><Cell className="h-[22px] w-8 rounded-[3px] border border-black"><Plus size={15} strokeWidth={1.300} /></Cell></div>
                </div>
              </div>
              <Participants />
            </div>
          </div>
        </div>
      </div>
      <Taskbar />
    </div>
  );
}
